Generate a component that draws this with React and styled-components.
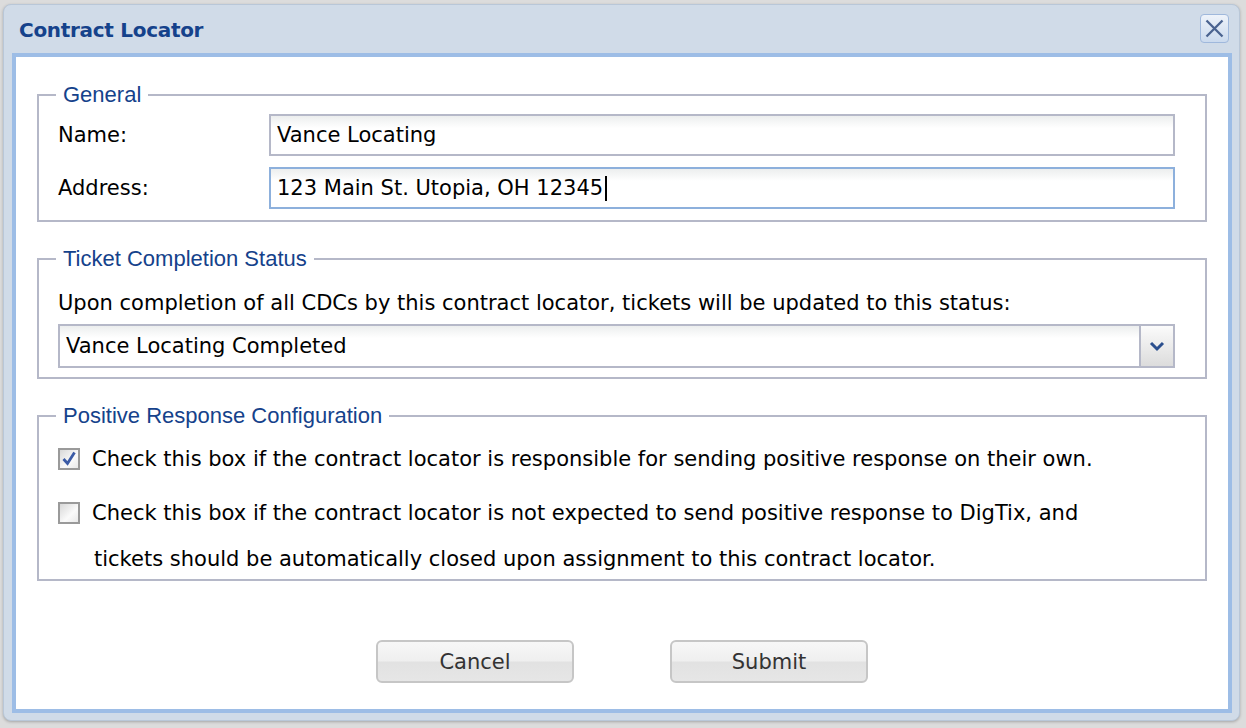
import React from 'react';
import styled, { createGlobalStyle } from 'styled-components';

const GlobalStyle = createGlobalStyle`
  html, body {
    margin: 0;
    padding: 0;
    background: #dcdcdc;
  }
  body {
    font-family: 'DejaVu Sans', Verdana, sans-serif;
  }
`;

const Page = styled.div`
  width: 1246px;
  height: 728px;
  box-sizing: border-box;
  padding: 4px 6px 7px 3px;
`;

const Window = styled.div`
  display: flex;
  flex-direction: column;
  width: 1237px;
  height: 717px;
  box-sizing: border-box;
  border: 1px solid #b9c7d8;
  border-radius: 8px;
  background: #d0dbe8;
  box-shadow: 0 1px 3px rgba(0, 0, 0, 0.25);
`;

const Header = styled.div`
  display: flex;
  align-items: center;
  justify-content: space-between;
  height: 48px;
  padding: 0 10px 0 15px;
`;

const Title = styled.h1`
  margin: 2px 0 0;
  font-family: 'DejaVu Sans', Verdana, sans-serif;
  font-size: 20px;
  font-weight: bold;
  letter-spacing: -0.3px;
  color: #15428b;
`;

const CloseButton = styled.button`
  display: flex;
  align-items: center;
  justify-content: center;
  width: 29px;
  height: 29px;
  margin-top: -2px;
  padding: 0;
  border: 1px solid #9fb8dc;
  border-radius: 4px;
  background: linear-gradient(#eef3fa, #cbdaee);
  cursor: pointer;
`;

const Body = styled.div`
  flex: 1;
  display: flex;
  flex-direction: column;
  margin: 0 7px 7px 8px;
  padding: 26px 21px 0;
  border: 4px solid #9dbde6;
  background: #fff;
`;

const Fieldset = styled.fieldset`
  margin: ${p => p.$gap || '0'} 0 0;
  padding: ${p => p.$pad || '7px 30px 11px 19px'};
  border: 2px solid #b5b8c8;
  min-width: 0;
`;

const Legend = styled.legend`
  margin-left: -2px;
  padding: 0 7px;
  font-family: 'Liberation Sans', Arial, sans-serif;
  font-size: 22px;
  line-height: 24px;
  color: #15428b;
`;

const FormRow = styled.div`
  display: flex;
  align-items: center;
  & + & {
    margin-top: 11px;
  }
`;

const Label = styled.label`
  width: 211px;
  flex: none;
  font-size: 21px;
  color: #000;
`;

const Field = styled.div`
  flex: 1;
  display: flex;
  align-items: center;
  height: 42px;
  box-sizing: border-box;
  padding: 0 6px;
  border: 2px solid ${p => (p.$focused ? '#8db0dc' : '#b5b8c8')};
  background: linear-gradient(#eceeee 0, #fff 12px);
  font-size: 21px;
  color: #000;
  white-space: nowrap;
`;

const Caret = styled.span`
  display: inline-block;
  width: 2px;
  height: 25px;
  margin-left: 2px;
  background: #000;
`;

const Text = styled.p`
  margin: 13px 0 9px;
  font-size: 21px;
  line-height: 24px;
  color: #000;
`;

const Select = styled.div`
  display: flex;
  height: 44px;
  box-sizing: border-box;
  border: 2px solid #b5b8c8;
  background: linear-gradient(#eceeee 0, #fff 12px);
`;

const SelectValue = styled.div`
  flex: 1;
  display: flex;
  align-items: center;
  padding: 0 6px;
  font-size: 21px;
  color: #000;
`;

const SelectTrigger = styled.div`
  display: flex;
  align-items: center;
  justify-content: center;
  width: 32px;
  border-left: 2px solid #b5b8c8;
  background: linear-gradient(#fbfbfb, #dcdcdc);
`;

const CheckRow = styled.label`
  display: flex;
  align-items: flex-start;
  gap: 12px;
  & + & {
    margin-top: 30px;
  }
`;

const Box = styled.span`
  flex: none;
  display: flex;
  align-items: center;
  justify-content: center;
  width: 22px;
  height: 22px;
  margin-top: 1px;
  box-sizing: border-box;
  border: 2px solid #9a9a9a;
  background: linear-gradient(135deg, #d8d8d8, #fafafa 60%, #e9e9e9);
`;

const CheckText = styled.span`
  display: flex;
  flex-direction: column;
  gap: 22px;
  font-size: 21px;
  line-height: 24px;
  color: #000;
`;

const Line = styled.span`
  padding-left: ${p => (p.$indent ? '2px' : '0')};
`;

const ButtonBar = styled.div`
  display: flex;
  justify-content: center;
  gap: 96px;
  margin-top: 59px;
`;

const Button = styled.button`
  width: 198px;
  height: 43px;
  border: 2px solid #c6c6c6;
  border-radius: 6px;
  background: linear-gradient(#f7f7f7 0%, #efefef 48%, #e2e2e2 52%, #e6e6e6 100%);
  font-family: 'DejaVu Sans', Verdana, sans-serif;
  font-size: 21px;
  color: #333;
  cursor: pointer;
`;

const CheckBox = ({ checked }) => (
  <Box>
    {checked && (
      <svg width="16" height="16" viewBox="0 0 16 16">
        <path d="M2.5 8 L6.5 12.5 L13.5 1.5" fill="none" stroke="#3b5ba6" strokeWidth="2.8" />
      </svg>
    )}
  </Box>
);

export default function App() {
  return (
    <>
      <GlobalStyle />
      <Page>
        <Window>
          <Header>
            <Title>Contract Locator</Title>
            <CloseButton aria-label="Close">
              <svg width="21" height="21" viewBox="0 0 21 21">
                <path d="M2.5 2.5 L18.5 18.5 M18.5 2.5 L2.5 18.5" stroke="#4a6390" strokeWidth="2.3" />
              </svg>
            </CloseButton>
          </Header>
          <Body>
            <Fieldset>
              <Legend>General</Legend>
              <FormRow>
                <Label>Name:</Label>
                <Field>Vance Locating</Field>
              </FormRow>
              <FormRow>
                <Label>Address:</Label>
                <Field $focused>
                  123 Main St. Utopia, OH 12345
                  <Caret />
                </Field>
              </FormRow>
            </Fieldset>

            <Fieldset $gap="25px" $pad="7px 30px 9px 19px">
              <Legend>Ticket Completion Status</Legend>
              <Text>Upon completion of all CDCs by this contract locator, tickets will be updated to this status:</Text>
              <Select>
                <SelectValue>Vance Locating Completed</SelectValue>
                <SelectTrigger>
                  <svg width="18" height="12" viewBox="0 0 18 12">
                    <path d="M3 3 L9 9 L15 3" fill="none" stroke="#2b4f8e" strokeWidth="3" />
                  </svg>
                </SelectTrigger>
              </Select>
            </Fieldset>

            <Fieldset $gap="25px" $pad="19px 30px 8px 19px">
              <Legend>Positive Response Configuration</Legend>
              <CheckRow>
                <CheckBox checked />
                <CheckText>
                  <Line>Check this box if the contract locator is responsible for sending positive response on their own.</Line>
                </CheckText>
              </CheckRow>
              <CheckRow>
                <CheckBox />
                <CheckText>
                  <Line>Check this box if the contract locator is not expected to send positive response to DigTix, and</Line>
                  <Line $indent>tickets should be automatically closed upon assignment to this contract locator.</Line>
                </CheckText>
              </CheckRow>
            </Fieldset>

            <ButtonBar>
              <Button>Cancel</Button>
              <Button>Submit</Button>
            </ButtonBar>
          </Body>
        </Window>
      </Page>
    </>
  );
}
